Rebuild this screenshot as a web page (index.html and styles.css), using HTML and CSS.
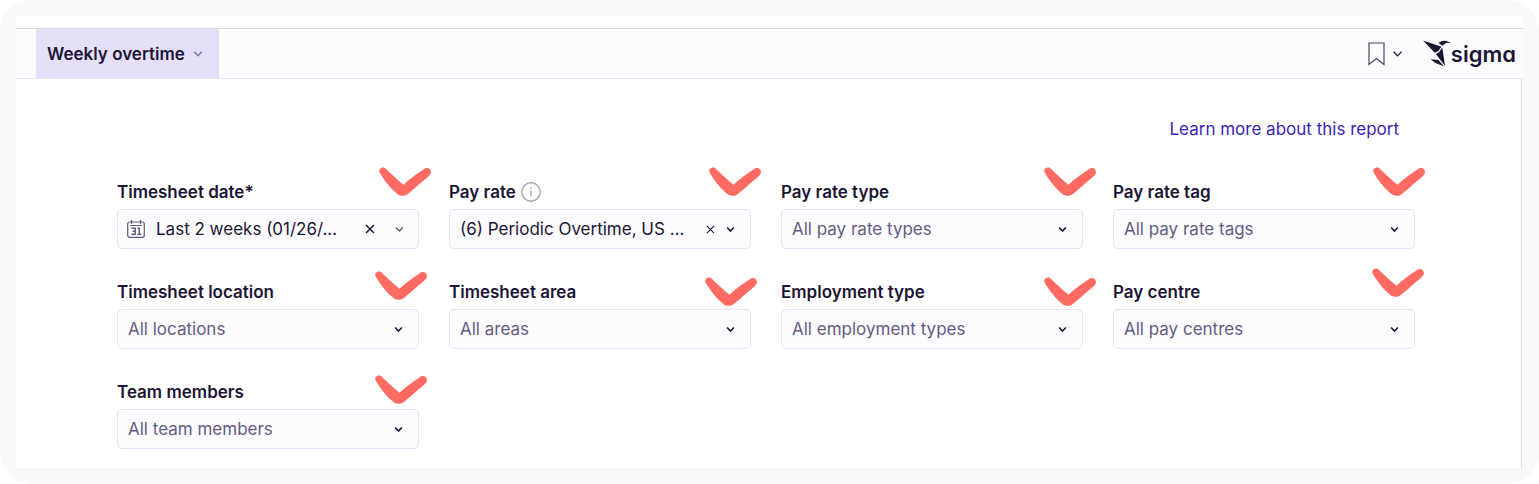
FILE: index.html
```html
<!DOCTYPE html>
<html lang="en">
<head>
<meta charset="utf-8">
<title>Weekly overtime</title>
<link rel="stylesheet" href="styles.css">
</head>
<body>
<svg class="defs" aria-hidden="true">
  <symbol id="chevron" viewBox="0 0 8 6"><path d="M1 1.200 4 4.400 7 1.200"/></symbol>
  <symbol id="cross" viewBox="0 0 10 10"><path d="M1 1 9 9M9 1 1 9"/></symbol>
  <symbol id="mark" viewBox="0 0 52 30"><path d="M.6 5.500C-.8 2.500 2.300-.6 6 1C12 6.500 18 12.500 24.500 17.700C30.500 12 37.500 6.500 46 1.400C50-.2 52.800 3 51.700 6.500C50.500 9 47 11.500 44 14C38.500 18.500 33.500 23.500 28.500 27.300C25.500 29.300 22 29.300 19.300 27.700C12.500 22.500 5.500 14 .6 5.500Z"/></symbol>
</svg>
<div class="frame">
  <main class="panel">
    <header class="topbar">
      <button class="tab" type="button">Weekly overtime
        <svg class="tab-chevron"><use href="#chevron"/></svg>
      </button>
      <div class="tools">
        <button class="bookmark" type="button" aria-label="Bookmarks">
          <svg class="bookmark-icon" viewBox="0 0 17 24"><path d="M1 1H16V22.500L8.500 16.500 1 22.500Z"/></svg>
          <svg class="bookmark-chevron"><use href="#chevron"/></svg>
        </button>
        <a class="brand" href="#">
          <svg class="brand-icon" viewBox="0 0 28 27"><path d="M0 .5 18.500 6.800 15 11.300 11.800 12.800ZM15.500 3C18.500 1 21 .3 24 1.300L28 2.800 23 3 19.500 5.800ZM19.300 7.500 22 26 12.800 14 16 12.300ZM7.500 19.300 15.500 20 21 26.500 12 22.800Z"/></svg>
          <span>sigma</span>
        </a>
      </div>
    </header>
    <div class="content">
      <a class="learn" href="#">Learn more about this report</a>
      <form class="filters">
        <div class="field">
          <label for="date">Timesheet date*</label>
          <div class="control">
            <svg class="calendar" viewBox="0 0 18 18"><rect x=".7" y="2" width="16.600" height="15.300" rx="2"/><path d="M3 5.500H15M4.500 0V4M13.500 0V4"/><path class="digits" d="M4.500 8.300H8.300V14.200H4.500M5.500 11.200H8.300M10.500 8.300H12.300V14M10.300 14.200H14.200"/></svg>
            <select class="box filled dated" id="date"><option>Last 2 weeks (01/26/...</option></select>
            <button class="clear wide" type="button" aria-label="Clear timesheet date"><svg><use href="#cross"/></svg></button>
            <svg class="chevron muted"><use href="#chevron"/></svg>
          </div>
          <svg class="mark m-date"><use href="#mark"/></svg>
        </div>
        <div class="field">
          <div class="label-row"><label for="rate">Pay rate</label>
            <svg class="info" viewBox="0 0 20 20"><circle cx="10" cy="10" r="9.200"/><path d="M10 8.500V14.500M10 5.300V6.800"/></svg>
          </div>
          <div class="control">
            <select class="box filled" id="rate"><option>(6) Periodic Overtime, US ...</option></select>
            <button class="clear" type="button" aria-label="Clear pay rate"><svg><use href="#cross"/></svg></button>
            <svg class="chevron"><use href="#chevron"/></svg>
          </div>
          <svg class="mark m-rate"><use href="#mark"/></svg>
        </div>
        <div class="field">
          <label for="rate-type">Pay rate type</label>
          <div class="control"><select class="box" id="rate-type"><option>All pay rate types</option></select><svg class="chevron"><use href="#chevron"/></svg></div>
          <svg class="mark m-type"><use href="#mark"/></svg>
        </div>
        <div class="field">
          <label for="rate-tag">Pay rate tag</label>
          <div class="control"><select class="box" id="rate-tag"><option>All pay rate tags</option></select><svg class="chevron"><use href="#chevron"/></svg></div>
          <svg class="mark m-tag"><use href="#mark"/></svg>
        </div>
        <div class="field">
          <label for="location">Timesheet location</label>
          <div class="control"><select class="box" id="location"><option>All locations</option></select><svg class="chevron"><use href="#chevron"/></svg></div>
          <svg class="mark m-location"><use href="#mark"/></svg>
        </div>
        <div class="field">
          <label for="area">Timesheet area</label>
          <div class="control"><select class="box" id="area"><option>All areas</option></select><svg class="chevron"><use href="#chevron"/></svg></div>
          <svg class="mark m-area"><use href="#mark"/></svg>
        </div>
        <div class="field">
          <label for="employment">Employment type</label>
          <div class="control"><select class="box" id="employment"><option>All employment types</option></select><svg class="chevron"><use href="#chevron"/></svg></div>
          <svg class="mark m-employment"><use href="#mark"/></svg>
        </div>
        <div class="field">
          <label for="centre">Pay centre</label>
          <div class="control"><select class="box" id="centre"><option>All pay centres</option></select><svg class="chevron"><use href="#chevron"/></svg></div>
          <svg class="mark m-centre"><use href="#mark"/></svg>
        </div>
        <div class="field">
          <label for="team">Team members</label>
          <div class="control"><select class="box" id="team"><option>All team members</option></select><svg class="chevron"><use href="#chevron"/></svg></div>
          <svg class="mark m-team"><use href="#mark"/></svg>
        </div>
      </form>
    </div>
  </main>
</div>
</body>
</html>
```

FILE: styles.css
```css
* { box-sizing: border-box; }
body { margin: 0; background: #fff; color: #1c1535; font: 17px/24px Inter, sans-serif; }
button, select { font: inherit; color: inherit; margin: 0; }
button { border: 0; background: none; padding: 0; cursor: pointer; }
svg { fill: none; stroke: currentColor; flex: none; display: block; }
.defs { position: absolute; width: 0; height: 0; }

.frame { padding: 16px; background: #f8f9fb; border-radius: 32px; }
.panel { background: #fff; padding-top: 12px; }

.topbar { display: flex; justify-content: space-between; height: 51px; padding: 0 7px 0 20px; background: #fcfbfe; border-top: 1px solid #d9d7e3; border-bottom: 1px solid #e6e2f7; }
.tab { display: flex; align-items: center; gap: 8px; padding: 0 15px 0 10px; border: 1px solid #e3e0fa; border-width: 0 1px; background: #e5dffa; font-weight: 600; }
.tab-chevron { width: 10px; height: 8px; color: #7a7391; }
.tools { display: flex; align-items: center; gap: 20px; }
.bookmark { display: flex; align-items: center; gap: 7px; }
.bookmark-icon { width: 17px; height: 24px; color: #4a4460; stroke-width: 1.2; }
.bookmark-chevron { width: 11px; height: 8px; }
.brand { display: flex; align-items: center; color: #1c1535; text-decoration: none; font-size: 22px; font-weight: 600; font-feature-settings: "cv11"; }
.brand-icon { width: 28px; height: 27px; fill: currentColor; stroke: none; }

.content { margin-right: 1px; border-right: 1px solid #dddbe3; padding: 38px 106px 19px 101px; display: flex; flex-direction: column; gap: 39px; }
.learn { align-self: flex-end; margin-right: 16px; color: #3a1fb5; text-decoration: none; }
.filters { display: grid; grid-template-columns: repeat(4, minmax(0, 1fr)); gap: 31px 30px; }
.field { position: relative; display: flex; flex-direction: column; gap: 5px; }
label { font-weight: 600; }
.label-row { display: flex; align-items: center; gap: 5px; }
.info { width: 20px; height: 20px; color: #aaa6b8; stroke-width: 1.4; }
.control { position: relative; }
.box { display: block; width: 100%; height: 40px; padding: 0 60px 0 10px; border: 1px solid #e6e2f7; border-radius: 5px; background: #fcfbfe; color: #635b83; appearance: none; text-overflow: ellipsis; }
.filled { color: #1c1535; }
.dated { padding-left: 38px; }
.calendar { position: absolute; left: 10px; top: 11px; width: 18px; height: 18px; color: #635b83; stroke-width: 1.2; }
.digits { stroke-width: 1.4; }
.chevron { position: absolute; right: 16px; top: 17px; width: 9px; height: 7px; stroke-width: 1.4; pointer-events: none; }
.muted { right: 15px; color: #635b83; stroke-width: 1.2; }
.clear { position: absolute; right: 36px; top: 16px; }
.clear svg { width: 9px; height: 9px; stroke-width: 1.2; }
.clear.wide { right: 44px; top: 15px; }
.clear.wide svg { width: 10px; height: 10px; stroke-width: 1.5; }

.mark { position: absolute; width: 52px; height: 30px; fill: #ff6b63; stroke: none; pointer-events: none; }
.m-date { right: -12px; top: -13px; }
.m-rate { right: -10px; top: -13px; }
.m-type { right: -13px; top: -13px; }
.m-tag { right: -10px; top: -13px; }
.m-location { right: -8px; top: -9px; }
.m-area { right: -6px; top: -3px; }
.m-employment { right: -13px; top: -3px; }
.m-centre { right: -9px; top: -12px; }
.m-team { right: -8px; top: -5px; }
```
